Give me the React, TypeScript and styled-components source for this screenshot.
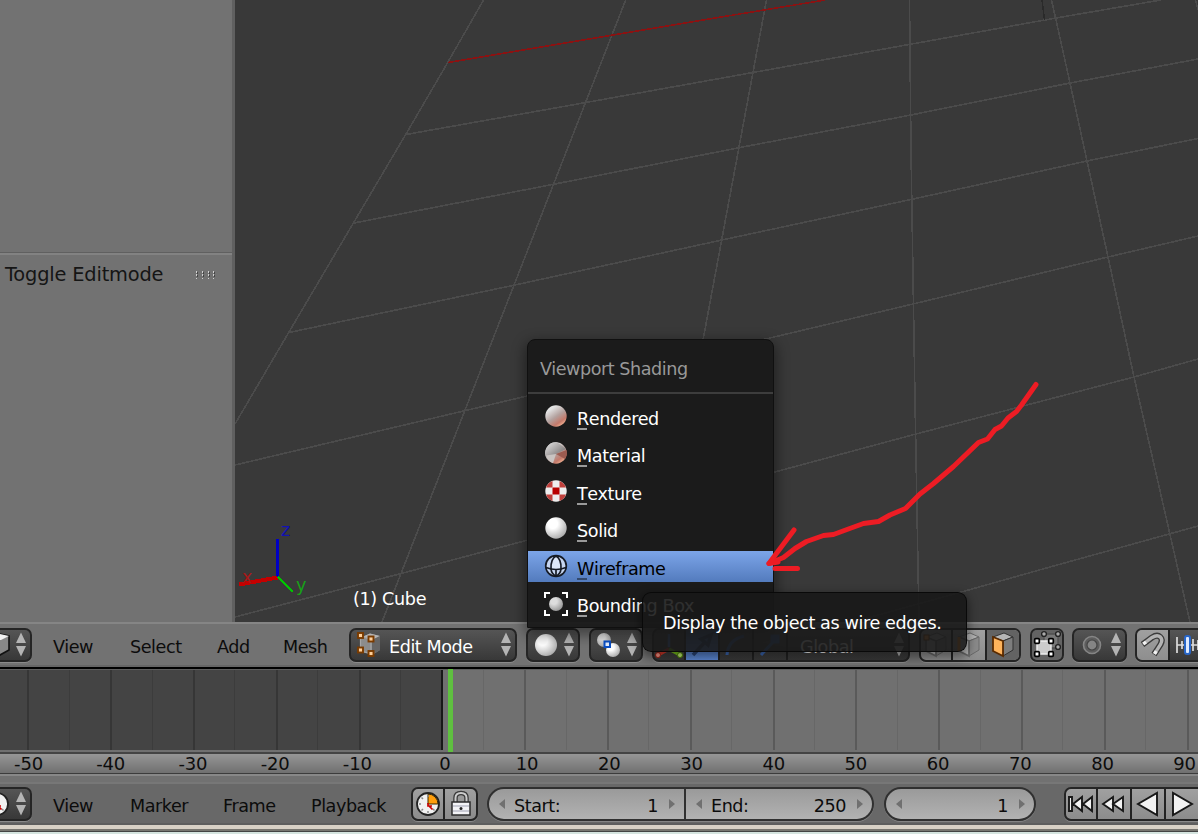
import React from 'react';
import styled, { createGlobalStyle, css } from 'styled-components';

const Global = createGlobalStyle`
  * { box-sizing: border-box; }
  body { margin: 0; overflow: hidden; background: #727272; }
`;

const Screen = styled.div`
  position: relative;
  display: flex;
  flex-direction: column;
  width: 1198px;
  height: 834px;
  overflow: hidden;
  background: #727272;
  font-family: 'DejaVu Sans', sans-serif;
  font-size: 17.6px;
  letter-spacing: -0.45px;
  color: #0c0c0c;
  white-space: nowrap;
`;

const Workspace = styled.div`
  display: flex;
  height: 622px;
`;

const ToolShelf = styled.aside`
  width: 235px;
  border-right: 3px solid #606060;
  background: #727272;
`;

const ShelfUpper = styled.div`
  height: 253px;
  border-bottom: 1px solid #606060;
`;

const OperatorPanel = styled.div`
  display: flex;
  align-items: center;
  justify-content: space-between;
  height: 41px;
  padding: 0 17px 0 5px;
  border-top: 2px solid #828282;
  font-size: 19.4px;
  letter-spacing: -0.18px;
  color: #151515;
`;

const Viewport = styled.main`
  position: relative;
  flex: 1;
  background: #393939;
`;

const ViewportDrawing = styled.svg`
  display: block;
`;

const ObjectInfo = styled.div`
  position: absolute;
  left: 118px;
  top: 588px;
  line-height: 22px;
  letter-spacing: -0.35px;
  color: #fff;
`;

const AxisLetter = styled.span<{ $x: number; $y: number; $color: string }>`
  position: absolute;
  left: ${(p) => p.$x}px;
  top: ${(p) => p.$y}px;
  line-height: 20px;
  color: ${(p) => p.$color};
`;

const Header = styled.header<{ $dark?: boolean }>`
  display: flex;
  align-items: center;
  flex-shrink: 0;
  height: ${(p) => (p.$dark ? 43 : 45)}px;
  background: ${(p) => (p.$dark ? '#686868' : '#727272')};
  border-top: 2px solid ${(p) => (p.$dark ? '#777' : '#858585')};
  border-bottom: 2px solid ${(p) => (p.$dark ? '#5e5e5e' : '#666')};
`;

const MenuLabel = styled.div<{ $w: number }>`
  width: ${(p) => p.$w}px;
  flex-shrink: 0;
  line-height: 24px;
  padding-top: 4px;
`;

const EditorLabelStart = styled(MenuLabel)`
  margin-left: 21px;
`;

const Control = styled.div<{ $w: number; $gap?: number; $flush?: boolean; $light?: boolean }>`
  display: flex;
  flex-shrink: 0;
  align-items: center;
  width: ${(p) => p.$w}px;
  height: 34px;
  margin-right: ${(p) => p.$gap ?? 9}px;
  border: 2px solid #252525;
  border-radius: 7px;
  overflow: hidden;
  background: ${(p) => (p.$light ? 'linear-gradient(#a0a0a0, #8c8c8c)' : 'linear-gradient(#555, #383838)')};
  box-shadow: 0 1px 0 #8a8a8a;
  color: #fff;
  ${(p) => p.$flush && css`
    border-left: 0;
    border-top-left-radius: 0;
    border-bottom-left-radius: 0;
  `}
`;

const Segment = styled.div<{ $w: number; $bg?: string; $last?: boolean }>`
  display: flex;
  flex-shrink: 0;
  align-items: center;
  justify-content: center;
  width: ${(p) => p.$w}px;
  height: 100%;
  border-right: ${(p) => (p.$last ? 0 : 2)}px solid #222;
  background: ${(p) => p.$bg ?? 'transparent'};
`;

const OrientationName = styled.span`
  flex: 1;
  padding: 4px 0 0 12px;
`;

const Icon = styled.svg<{ $l?: number }>`
  display: block;
  flex-shrink: 0;
  margin-left: ${(p) => p.$l ?? 0}px;
  overflow: visible;
`;

const ModeText = styled.span`
  flex: 1;
  padding: 4px 0 0 6px;
`;

const SpinSvg = styled.svg`
  display: block;
  flex-shrink: 0;
  margin: 0 3px 0 auto;
`;

const Divider = styled.div`
  height: 2px;
  flex-shrink: 0;
  background: #000;
`;

const Timeline = styled.section`
  height: 83px;
  flex-shrink: 0;
  background: #707070;
`;

const Ruler = styled.div`
  display: flex;
  align-items: center;
  flex-shrink: 0;
  height: 22px;
  border-top: 2px solid #444;
  border-bottom: 1px solid #3c3c3c;
  background: linear-gradient(#969696, #707070);
  overflow: hidden;
`;

const Tick = styled.span<{ $first?: boolean; $neg?: boolean }>`
  width: 82.2px;
  flex-shrink: 0;
  margin-left: ${(p) => (p.$first ? -7.6 : 0)}px;
  padding: 1px ${(p) => (p.$neg ? 10 : 0)}px 0 ${(p) => (p.$neg ? 0 : 1)}px;
  text-align: center;
  line-height: 20px;
  font-size: 18px;
  letter-spacing: -0.2px;
`;

const RulerGap = styled.div`
  height: 8px;
  flex-shrink: 0;
  border-top: 2px solid #888;
  background: #717171;
`;

const NumberField = styled.div<{ $w: number; $side: 'left' | 'right' | 'both'; $gap: number }>`
  display: flex;
  align-items: center;
  flex-shrink: 0;
  width: ${(p) => p.$w}px;
  height: 34px;
  margin-right: ${(p) => p.$gap}px;
  padding: 0 8px 0 9px;
  border: 2px solid #303030;
  border-left-width: ${(p) => (p.$side === 'right' ? 0 : 2)}px;
  border-radius: ${(p) => (p.$side === 'both' ? '17px' : p.$side === 'left' ? '17px 0 0 17px' : '0 17px 17px 0')};
  background: linear-gradient(#9a9a9a, #b2b2b2);
  box-shadow: 0 1px 0 #858585;
  svg { flex-shrink: 0; }
`;

const FieldName = styled.span`
  padding: 4px 0 0 8px;
`;

const FieldValue = styled.span`
  margin-left: auto;
  padding: 4px 10px 0 0;
`;

const DesktopEdge = styled.div`
  height: 9px;
  flex-shrink: 0;
  background: linear-gradient(#d8d1c6 0 4px, #77756f 4px 6px, #444 6px 7px, #d5e4df 7px 9px);
`;

const ShadingMenu = styled.div`
  position: absolute;
  left: 527px;
  top: 339px;
  width: 247px;
  height: 289px;
  border: 1px solid #101010;
  border-radius: 8px 8px 0 0;
  background: rgba(26, 26, 26, 0.965);
  box-shadow: 0 5px 14px 2px rgba(0, 0, 0, 0.45);
  color: #fff;
`;

const MenuTitle = styled.div`
  height: 54px;
  padding: 17px 0 0 12px;
  border-bottom: 2px solid #3d3d3d;
  line-height: 24px;
  color: #999;
`;

const MenuList = styled.div`
  display: flex;
  flex-direction: column;
  gap: 6.5px;
  padding-top: 7px;
`;

const MenuRow = styled.div<{ $active?: boolean }>`
  display: flex;
  align-items: center;
  height: 31px;
  padding-left: 16px;
  gap: 9px;
  letter-spacing: -0.4px;
  color: ${(p) => (p.$active ? '#000' : '#fff')};
  background: ${(p) => (p.$active ? 'linear-gradient(#7ca5e9, #537bbd)' : 'transparent')};
`;

const RowText = styled.span`
  display: flex;
  line-height: 24px;
  padding-top: 4px;
`;

const HotKey = styled.span<{ $active?: boolean }>`
  background: linear-gradient(${(p) => (p.$active ? '#33496d, #33496d' : '#9a9a9a, #9a9a9a')}) 0 21px / 10px 2px no-repeat;
`;

const Tooltip = styled.div`
  position: absolute;
  left: 642px;
  top: 592px;
  width: 325px;
  height: 60px;
  padding: 18px 0 0 20px;
  border: 1px solid rgba(8, 8, 8, 0.9);
  border-radius: 9px;
  background: rgba(24, 24, 24, 0.9);
  box-shadow: 0 4px 10px 2px rgba(0, 0, 0, 0.4);
  line-height: 24px;
  letter-spacing: -0.4px;
  color: #fff;
`;

const Annotation = styled.svg`
  position: absolute;
  left: 760px;
  top: 375px;
`;

const Spin = () => (
  <SpinSvg width="12" height="25" viewBox="0 0 12 25">
    <path d="M6 0.5 11 11H1ZM6 24.5 11 14H1Z" fill="#b4b4b4" />
  </SpinSvg>
);

const Arrow = ({ back }: { back?: boolean }) => (
  <svg width="8" height="12" viewBox="0 0 8 12">
    <path d={back ? 'M7 1V11L1 6Z' : 'M1 1V11L7 6Z'} fill="#707070" />
  </svg>
);

const Defs = () => (
  <svg width="0" height="0" style={{ display: 'block' }}>
    <defs>
      <radialGradient id="white" cx="0.35" cy="0.3" r="0.75">
        <stop offset="0.3" stopColor="#fff" />
        <stop offset="1" stopColor="#aaa" />
      </radialGradient>
      <linearGradient id="rendered" x1="0.2" y1="0.1" x2="0.8" y2="0.95">
        <stop offset="0.1" stopColor="#e2e2e2" />
        <stop offset="0.5" stopColor="#b3a19e" />
        <stop offset="0.8" stopColor="#c4796a" />
        <stop offset="1" stopColor="#f4b595" />
      </linearGradient>
      <linearGradient id="facet" x1="0" y1="0" x2="1" y2="1">
        <stop offset="0" stopColor="#e8e8e8" />
        <stop offset="1" stopColor="#5c5656" />
      </linearGradient>
    </defs>
  </svg>
);

type ShadeKind = 'rendered' | 'material' | 'texture' | 'solid' | 'wire' | 'bounds';

const ShadeIcon = ({ kind }: { kind: ShadeKind }) => (
  <Icon width="24" height="24" viewBox="0 0 24 24">
    {kind === 'rendered' && <circle cx="12" cy="11" r="10.7" fill="url(#rendered)" />}
    {kind === 'material' && (
      <>
        <circle cx="12" cy="11" r="10.7" fill="url(#rendered)" />
        <path d="M12 12 3 17A10.7 10.7 0 0 1 13 .3L22 7Z" fill="url(#facet)" />
        <path d="M12 12 22.5 8A10.7 10.7 0 0 1 21 17Z" fill="#9c5b50" />
        <path d="M12 12 2 13.5A10.7 10.7 0 0 0 9 21.3Z" fill="#c9c4c2" />
      </>
    )}
    {kind === 'texture' && (
      <>
        <circle cx="12" cy="11" r="10.7" fill="#eee" />
        <path d="M8.5 7.5h7v7h-7z" fill="#b80000" />
        <path d="M8.5 7.5H2Q4 2.5 8.5 1ZM15.5 7.5H22Q20 2.5 15.5 1ZM8.5 14.5H2Q4 19.5 8.5 21ZM15.5 14.5H22Q20 19.5 15.5 21Z" fill="#c0403c" />
      </>
    )}
    {kind === 'solid' && <circle cx="12" cy="11" r="10.7" fill="url(#white)" />}
    {kind === 'wire' && (
      <g fill="none" stroke="#151a24" strokeWidth="1.7">
        <circle cx="12" cy="11" r="10.3" fill="#c6d5f0" />
        <path d="M7 14Q6.5 5 12 1.5Q17.5 5 17 14Z" fill="#dde7f8" stroke="none" />
        <path d="M12 1Q6.5 4 7 14Q7.5 19 12 21Q16.500 19 17 14Q17.500 4 12 1" />
        <path d="M2 12.500Q12 16.500 22 12.500M12 14.500V21.500" />
      </g>
    )}
    {kind === 'bounds' && (
      <>
        <circle cx="12" cy="12" r="7" fill="url(#white)" opacity="0.85" />
        <path d="M1 6V1H6M18 1H23V6M23 18V23H18M6 23H1V18" fill="none" stroke="#fff" strokeWidth="2" />
      </>
    )}
  </Icon>
);

const EditModeIcon = () => (
  <Icon width="26" height="26" viewBox="0 0 26 26" $l={6}>
    <path d="M5 5 13 1.5 23 4V18L15 23 5 20Z" fill="#858585" />
    <path d="M5 5 13 1.5 23 4 15 8Z" fill="#b5b5b5" />
    <path d="M15 8 23 4V18L15 23Z" fill="#666" />
    <path d="M3.5 3.5V19L14 21.5V8Z" fill="#8c8c8c" stroke="#a5a5a5" strokeWidth="1.2" />
    {[[3.5, 3.5], [14, 7], [3.5, 18], [14, 21.5]].map(([x, y]) => (
      <rect key={`${x}${y}`} x={x - 2.5} y={y - 2.5} width="5" height="5" fill="#ffd09b" stroke="#7a3b00" strokeWidth="1.9" />
    ))}
  </Icon>
);

const CubeIcon = ({ mark }: { mark: 'vertex' | 'edge' | 'face' }) => {
  const solid = mark === 'face';
  const edge = solid ? '#333' : '#6a6a6a';
  return (
    <Icon width="24" height="26" viewBox="0 0 24 26">
      <path d="M2 5 13 1 22 5 12 9Z" fill="#b5b5b5" stroke={edge} strokeWidth="1" />
      <path d="M12 9 22 5V18L12 24Z" fill={solid ? '#7d7d7d' : '#8a8a8a'} stroke={edge} strokeWidth="1" />
      <path d="M2 5 12 9V24L2 19Z" fill={solid ? '#ffb45c' : '#b8b8b8'} stroke={solid ? '#5b2b00' : edge} strokeWidth="1.8" />
      {mark === 'vertex' && <rect x="0" y="3" width="5" height="5" fill="#ff9a3c" stroke="#7a3b00" />}
      {mark === 'edge' && <path d="M2 5V19" stroke="#ff8a20" strokeWidth="3" />}
    </Icon>
  );
};

const OccludeIcon = () => (
  <Icon width="28" height="28" viewBox="0 0 28 28">
    <path d="M11 3H25V17H11Z" fill="#777" stroke="#505050" strokeWidth="1.3" />
    {[[11, 3], [25, 3], [25, 16]].map(([x, y]) => (
      <circle key={`${x}-${y}`} cx={x} cy={y} r="2.4" fill="#aaa" stroke="#222" strokeWidth="1.4" />
    ))}
    <path d="M4 10H18V23H4Z" fill="#ccc" stroke="#eee" strokeWidth="1.5" />
    {[[4, 10], [18, 10], [4, 23], [18, 23]].map(([x, y]) => (
      <rect key={`${x}-${y}`} x={x - 2.3} y={y - 2.3} width="4.6" height="4.6" rx="1" fill="#fff" stroke="#000" strokeWidth="1.7" />
    ))}
  </Icon>
);

const PivotIcon = () => (
  <Icon width="24" height="26" viewBox="0 0 24 26" $l={5}>
    <circle cx="8" cy="8" r="7" fill="url(#white)" opacity="0.85" />
    <circle cx="17" cy="18" r="7" fill="url(#white)" />
    <rect x="8.5" y="9.5" width="5.5" height="5.5" fill="#e7f0ff" stroke="#0a50c8" strokeWidth="2" />
  </Icon>
);

const MagnetIcon = () => (
  <Icon width="26" height="26" viewBox="0 0 26 26">
    <g fill="none">
      <path d="M2.500 12.500 12 5.500C19 1 24 6 20.500 12.500L14 22.500" stroke="#3c3c3c" strokeWidth="6" />
      <path d="M3.300 12 12 5.500C19 1 24 6 20.500 12.500L14.500 21.800" stroke="#b4b4b4" strokeWidth="3.400" />
      <path d="M3.300 12 6 10M14.500 21.800 16.200 19.100" stroke="#f2f2f2" strokeWidth="3.400" />
    </g>
  </Icon>
);

const ClockFace = ({ wedge }: { wedge?: boolean }) => (
  <>
    <circle cx="12" cy="12" r="11" fill="#f1f1f1" stroke="#222" strokeWidth="1.8" />
    {wedge && <path d="M12 12V2A10 10 0 0 1 22 12Z" fill="#ff9e0d" stroke="#3d2a00" strokeWidth="1" />}
    <path d="M12 3V5M3 12H5M12 19V21M5.5 5.5 7 7M5.5 18.5 7 17M17 17 18.5 18.5" stroke="#888" strokeWidth="1.5" />
    <path d="M12 11V14H16M13 14 16.5 17.5" stroke="#c80000" strokeWidth="1.7" fill="none" />
  </>
);

const LockIcon = () => (
  <Icon width="22" height="25" viewBox="0 0 22 25">
    <path d="M5.5 12V7Q5.5 2 11 2Q16.5 2 16.5 7V12" fill="none" stroke="#3a3a3a" strokeWidth="4.5" />
    <path d="M5.5 12V7Q5.5 2 11 2Q16.5 2 16.5 7V12" fill="none" stroke="#ccc" strokeWidth="2" />
    <rect x="2" y="11" width="18" height="13" fill="#f3f3f6" stroke="#2b2b2b" strokeWidth="1.5" />
    <path d="M3 15H19M3 20H19" stroke="#bcbdc9" strokeWidth="1.3" />
    <circle cx="11" cy="17.5" r="1.5" fill="#222" />
  </Icon>
);

const TransportIcon = ({ d }: { d: string }) => (
  <Icon width="28" height="26" viewBox="0 0 28 26">
    <path d={d} fill="#f2f2f2" stroke="#181818" strokeWidth="1.9" />
  </Icon>
);

const gridLines = [
  '483.5,0 448,62 406,134 354,222 289,332 235,424',
  '625.7,0 492.5,340 382,622',
  '766.5,0 703,340 650.5,622',
  '909.5,0 911,150 915,400 919,622',
  '1051.5,0 1056,20 1070,83 1087,161 1108,257 1134,377 1190,622',
  '1195.5,0 1198,10',
  '406,134.5 586,102.5 753,72.5 909,44.5 1056,18 1161,0',
  '354,223 555,184 740,147.5 911,115 1070,83 1198,59',
  '289,332.5 515,285 722,240 911,199.5 1087,161 1198,138.5',
  '235,465 527,396 770,338 913,304 1108,257 1198,236',
  '235,617 403,573 528,540 773,472.5 916,434 1134,377 1198,359',
  '835,627 972,589 1050,567 1198,526',
];

const frames = Array.from({ length: 31 }, (_, i) => ({ x: 28.3 + i * 41.4, major: i % 2 === 0 }));
const ticks = [-50, -40, -30, -20, -10, 0, 10, 20, 30, 40, 50, 60, 70, 80, 90];

const shadingRows: { label: string; kind: ShadeKind }[] = [
  { label: 'Rendered', kind: 'rendered' },
  { label: 'Material', kind: 'material' },
  { label: 'Texture', kind: 'texture' },
  { label: 'Solid', kind: 'solid' },
  { label: 'Wireframe', kind: 'wire' },
  { label: 'Bounding Box', kind: 'bounds' },
];

export default function App() {
  return (
    <Screen>
      <Global />
      <Workspace>
        <ToolShelf>
          <ShelfUpper />
          <OperatorPanel>
            Toggle Editmode
            <svg width="20" height="9" viewBox="0 0 20 9" shapeRendering="crispEdges">
              {[1, 7, 13, 18].map((x) => (
                <g key={x}>
                  <path d={`M${x} 1h1v2h-1zM${x} 4h1v2h-1zM${x} 8h1v1h-1z`} fill="#d0d0d0" />
                  <path d={`M${x + 1} 2h1v2h-1zM${x + 1} 5h1v2h-1z`} fill="#444" />
                </g>
              ))}
            </svg>
          </OperatorPanel>
        </ToolShelf>
        <Viewport>
          <ViewportDrawing width="963" height="622" viewBox="235 0 963 622">
            <g fill="none" shapeRendering="crispEdges" strokeWidth="1.6" stroke="#4b4b4b">
              {gridLines.map((p) => <polyline key={p} points={p} />)}
              <polyline points="1042,0 1044.5,20" stroke="#2a2a2a" />
              <polyline points="448,62.5 700,20.5 825,0" stroke="#8b1212" />
              <path d="M277.5 539V578" stroke="#0000c4" strokeWidth="3" />
              <path d="M277.5 577.5 239 584.5" stroke="#c40000" strokeWidth="4" />
              <path d="M278 577 293 592" stroke="#00c400" strokeWidth="2.6" />
            </g>
          </ViewportDrawing>
          <AxisLetter $x={46} $y={520} $color="#1212b4">z</AxisLetter>
          <AxisLetter $x={7} $y={567} $color="#a81818">x</AxisLetter>
          <AxisLetter $x={61} $y={575} $color="#18a018">y</AxisLetter>
          <ObjectInfo>(1) Cube</ObjectInfo>
        </Viewport>
      </Workspace>

      <Header>
        <Control $w={32} $gap={0} $flush>
          <Icon width="10" height="24" viewBox="0 0 10 24">
            <path d="M-8 6 0 1 9 3V17L0 22-8 18Z" fill="#888" stroke="#111" strokeWidth="1.6" />
            <path d="M-8 6 0 1 9 3 1 7Z" fill="#f2f2f2" />
          </Icon>
          <Spin />
        </Control>
        <EditorLabelStart $w={77}>View</EditorLabelStart>
        <MenuLabel $w={87}>Select</MenuLabel>
        <MenuLabel $w={66}>Add</MenuLabel>
        <MenuLabel $w={66}>Mesh</MenuLabel>
        <Control $w={168}>
          <EditModeIcon />
          <ModeText>Edit Mode</ModeText>
          <Spin />
        </Control>
        <Control $w={54}>
          <Icon width="24" height="24" viewBox="0 0 24 24" $l={6}>
            <circle cx="12" cy="12" r="11" fill="url(#white)" />
          </Icon>
          <Spin />
        </Control>
        <Control $w={54}>
          <PivotIcon />
          <Spin />
        </Control>
        <Control $w={258}>
          <Segment $w={32}>
            <Icon width="28" height="26" viewBox="0 0 28 26">
              <path d="M14 15V2" stroke="#4d82dd" strokeWidth="2.5" />
              <path d="M14 17 3 23" stroke="#d73a2b" strokeWidth="3.2" />
              <path d="M14 17 25 23" stroke="#7cc41c" strokeWidth="3.2" />
              <circle cx="3" cy="23" r="2.5" fill="#ff9c8c" stroke="#a01d10" />
              <circle cx="25" cy="23" r="2.5" fill="#c8f07a" stroke="#4c8a00" />
            </Icon>
          </Segment>
          <Segment $w={34} $bg="linear-gradient(#4a72b5, #5c88d4)">
            <Icon width="24" height="26" viewBox="0 0 24 26">
              <path d="M3 23 16 9M11 7 21 3 18 13Z" fill="#3c68b4" stroke="#2a4678" strokeWidth="3.5" />
            </Icon>
          </Segment>
          <Segment $w={34}>
            <Icon width="24" height="26" viewBox="0 0 24 26">
              <path d="M3 23Q4 8 20 4" fill="none" stroke="#3c68b4" strokeWidth="3" />
            </Icon>
          </Segment>
          <Segment $w={34}>
            <Icon width="24" height="26" viewBox="0 0 24 26">
              <path d="M3 23 15 10M14 4H20V10H14Z" fill="#3c68b4" stroke="#3c68b4" strokeWidth="3" />
            </Icon>
          </Segment>
          <OrientationName>Global</OrientationName>
          <Spin />
        </Control>
        <Control $w={102} $light>
          <Segment $w={32}><CubeIcon mark="vertex" /></Segment>
          <Segment $w={34}><CubeIcon mark="edge" /></Segment>
          <Segment $w={32} $bg="#636363" $last><CubeIcon mark="face" /></Segment>
        </Control>
        <Control $w={34} $gap={8}>
          <Segment $w={30} $bg="#636363" $last><OccludeIcon /></Segment>
        </Control>
        <Control $w={55} $gap={8}>
          <Icon width="20" height="20" viewBox="0 0 20 20" $l={8}>
            <circle cx="10" cy="10" r="8.5" fill="#5d5d5d" stroke="#858585" strokeWidth="1.6" />
            <circle cx="10" cy="10" r="5" fill="#858585" stroke="#444" strokeWidth="1.2" />
          </Icon>
          <Spin />
        </Control>
        <Control $w={80} $gap={0}>
          <Segment $w={33} $bg="linear-gradient(#a0a0a0, #8e8e8e)"><MagnetIcon /></Segment>
          <Icon width="30" height="26" viewBox="0 0 30 26" $l={6}>
            <path d="M1 5V21M1 13H27M6 9V17M17 7V19M22 8V18" stroke="#ddd" strokeWidth="1.7" />
            <rect x="9" y="4" width="5" height="18" rx="2" fill="#dce9ff" stroke="#2866c8" strokeWidth="2" />
          </Icon>
        </Control>
      </Header>
      <Divider />

      <Timeline>
        <svg width="1198" height="83" viewBox="0 0 1198 83" shapeRendering="crispEdges" style={{ display: 'block' }}>
          <rect width="442" height="81" fill="#444" />
          {frames.map(({ x, major }) => (
            <rect
              key={x}
              x={x - 1}
              y="0"
              width={major ? 2 : 1}
              height="81"
              fill={x < 430 ? (major ? '#363636' : '#3c3c3c') : x < 445 ? '#181818' : major ? '#5a5a5a' : '#676767'}
            />
          ))}
          <rect width="1198" height="1" fill="#5e5e5e" />
          <rect x="448" width="5" height="83" fill="#5fc040" />
        </svg>
      </Timeline>
      <Ruler>
        {ticks.map((t) => <Tick key={t} $first={t === -50} $neg={t < 0}>{t}</Tick>)}
      </Ruler>
      <RulerGap />

      <Header $dark>
        <Control $w={32} $gap={0} $flush>
          <Icon width="10" height="24" viewBox="14 0 10 24">
            <g transform="translate(-1)"><ClockFace /></g>
          </Icon>
          <Spin />
        </Control>
        <EditorLabelStart $w={77}>View</EditorLabelStart>
        <MenuLabel $w={93}>Marker</MenuLabel>
        <MenuLabel $w={88}>Frame</MenuLabel>
        <MenuLabel $w={100}>Playback</MenuLabel>
        <Control $w={67} $light>
          <Segment $w={32}>
            <Icon width="24" height="24" viewBox="0 0 24 24"><ClockFace wedge /></Icon>
          </Segment>
          <Segment $w={31} $last><LockIcon /></Segment>
        </Control>
        <NumberField $w={199} $side="left" $gap={0}>
          <Arrow back />
          <FieldName>Start:</FieldName>
          <FieldValue>1</FieldValue>
          <Arrow />
        </NumberField>
        <NumberField $w={188} $side="right" $gap={10}>
          <Arrow back />
          <FieldName>End:</FieldName>
          <FieldValue>250</FieldValue>
          <Arrow />
        </NumberField>
        <NumberField $w={152} $side="both" $gap={28}>
          <Arrow back />
          <FieldValue>1</FieldValue>
          <Arrow />
        </NumberField>
        <Control $w={170} $gap={0} $light>
          <Segment $w={32}><TransportIcon d="M2 6H5V20H2ZM15 6V20L6 13ZM25 6V20L16 13Z" /></Segment>
          <Segment $w={34}><TransportIcon d="M13 6V20L3 13ZM23 6V20L13 13Z" /></Segment>
          <Segment $w={34}><TransportIcon d="M23 2V24L4 13Z" /></Segment>
          <Segment $w={34}><TransportIcon d="M5 2V24L24 13Z" /></Segment>
        </Control>
      </Header>
      <DesktopEdge />

      <ShadingMenu>
        <MenuTitle>Viewport Shading</MenuTitle>
        <MenuList>
          {shadingRows.map(({ label, kind }) => (
            <MenuRow key={kind} $active={kind === 'wire'}>
              <ShadeIcon kind={kind} />
              <RowText>
                <HotKey $active={kind === 'wire'}>{label[0]}</HotKey>
                {label.slice(1)}
              </RowText>
            </MenuRow>
          ))}
        </MenuList>
      </ShadingMenu>
      <Tooltip>Display the object as wire edges.</Tooltip>
      <Annotation width="290" height="205" viewBox="760 375 290 205">
        <g fill="none" stroke="#ed1c24" strokeWidth="5" strokeLinecap="round" strokeLinejoin="round">
          <path d="M1036 384.5 1030 393 1021.5 405 1016.5 411.5 1008 418 1001.5 426 995 429.5 987.5 439 978.5 442.5 953.5 466.5 933.5 483.5 920 494 905.5 508.5 890 515 878.5 521.5 863.5 523.5 847 529.5 833.5 534.5 823.5 535.5 806.5 541.5 795 548.5 783.5 557.5 769 563.5" />
          <path d="M794 530 776 554 769 563.5 778 562M775 568.5H797.5" />
        </g>
      </Annotation>
      <Defs />
    </Screen>
  );
}
